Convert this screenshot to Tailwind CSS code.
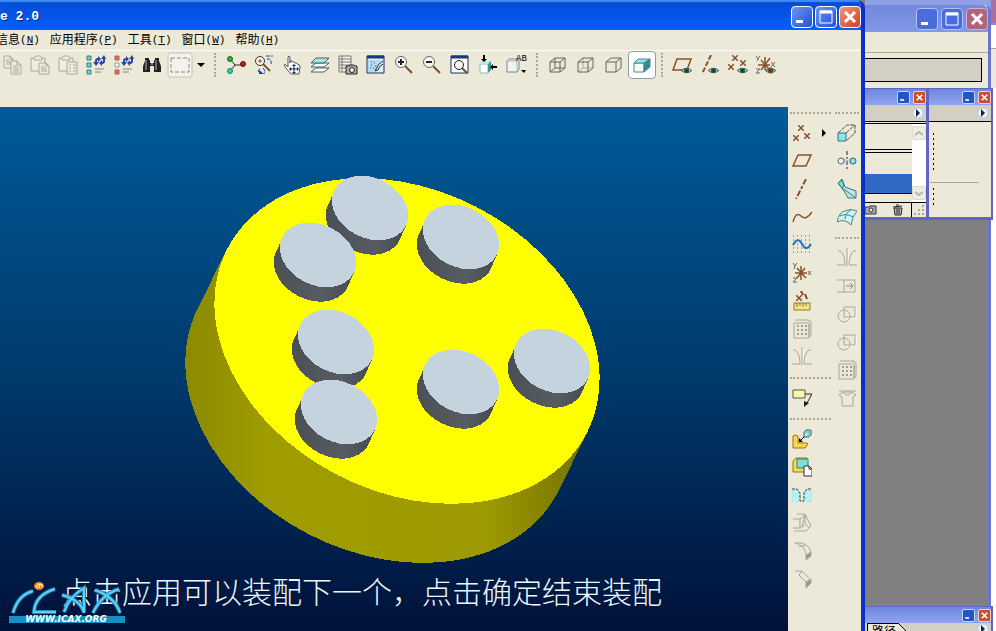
<!DOCTYPE html>
<html lang="zh-CN">
<head>
    <meta charset="UTF-8">
    <meta name="viewport" content="width=device-width, initial-scale=1.0">
    <title>2.0</title>
    <script src="https://cdn.jsdelivr.net/npm/@tailwindcss/browser@4"></script>
</head>
<body class="flex h-screen overflow-hidden bg-[#808080] font-['Liberation_Sans','Noto_Sans_CJK_SC',sans-serif] text-black">

<!-- shared symbols -->
<svg class="hidden">
    <symbol id="eye" viewBox="0 0 12 8"><path d="M0 4Q6-1 12 4Q6 9 0 4Z" fill="#dfe8e0" stroke="#1f3a34"/><circle cx="6" cy="4" r="3" fill="#1f6058"/><circle cx="6" cy="4" r="1" fill="#000"/></symbol>
    <symbol id="mirror" viewBox="0 0 20 20"><path d="M11 1v19" stroke="#fff"/><path d="M10 0v19M1 3h2q5 3 5 14M19 3h-2q-5 3-5 14M0 17h8M12 17h8" fill="none" stroke="#aaa798"/></symbol>
    <symbol id="grid" viewBox="0 0 20 20"><path d="M3 1h14l2 2v14h-2M17 5v14H2V4M2 4h13l2-2M17 4v14" fill="none" stroke="#aaa798"/><path d="M5 7h2M9 7h2M13 7h2M5 11h2M9 11h2M13 11h2M5 15h2M9 15h2M13 15h2" stroke="#a09d90" stroke-width="2"/></symbol>
    <symbol id="bool" viewBox="0 0 20 20"><path d="M9 14h10V4" fill="none" stroke="#fff"/><circle cx="7" cy="12" r="6" fill="none" stroke="#aaa798"/><path d="M7 3h11v10H7z" fill="none" stroke="#aaa798"/></symbol>
    <symbol id="arrow" viewBox="0 0 12 12"><circle cx="6" cy="6" r="5" fill="#eef4ff" stroke="#b8cdf2"/><path d="M4 2l4 4-4 4z" fill="#123"/></symbol>
    <symbol id="min" viewBox="0 0 20 20"><path d="M4 13h7v3H4z" fill="#fff"/></symbol>
    <symbol id="max" viewBox="0 0 20 20"><path d="M4 4h12v12H4z" fill="none" stroke="#fff"/><path d="M4 5h12" stroke="#fff" stroke-width="3"/></symbol>
    <symbol id="close" viewBox="0 0 20 20"><path d="M5 5l10 10M15 5L5 15" stroke="#fff" stroke-width="3"/></symbol>
    <symbol id="x" viewBox="0 0 6 6"><path d="M0 0l6 6M6 0L0 6" stroke="#8a5028" stroke-width="1.5"/></symbol>
</svg>

<!-- main window -->
<div class="flex min-w-0 flex-1 flex-col overflow-hidden rounded-tr-lg border-r-4 border-[#0a31c4] bg-[#ece9d8]">
    <header class="flex h-[30px] shrink-0 items-center justify-between bg-linear-to-b from-[#0a4bd0] via-[#0454e8] to-[#0361fb] shadow-[inset_0_2px_1px_#3f8df5]">
        <h1 class="pt-1 font-['Liberation_Mono',monospace] text-[13px] font-bold whitespace-pre text-white [text-shadow:1px_1px_#0a2a80]">e 2.0</h1>
        <div class="flex gap-0.5 pt-1">
            <button aria-label="最小化" class="size-[22px] rounded-sm border border-white bg-linear-to-br from-[#7094ee] to-[#1c50d8]"><svg class="size-full"><use href="#min"/></svg></button>
            <button aria-label="最大化" class="size-[22px] rounded-sm border border-white bg-linear-to-br from-[#7094ee] to-[#1c50d8]"><svg class="size-full"><use href="#max"/></svg></button>
            <button aria-label="关闭" class="size-[22px] rounded-sm border border-white bg-linear-to-br from-[#ee9478] to-[#cf4018]"><svg class="size-full"><use href="#close"/></svg></button>
        </div>
    </header>

    <nav class="-ml-1 flex h-[21px] shrink-0 items-center gap-2.5 border-b border-white text-xs whitespace-nowrap">
        <button class="flex items-center">信息<span class="font-['Liberation_Mono',monospace] text-[11px]">(<u>N</u>)</span></button>
        <button class="flex items-center">应用程序<span class="font-['Liberation_Mono',monospace] text-[11px]">(<u>P</u>)</span></button>
        <button class="flex items-center">工具<span class="font-['Liberation_Mono',monospace] text-[11px]">(<u>T</u>)</span></button>
        <button class="flex items-center">窗口<span class="font-['Liberation_Mono',monospace] text-[11px]">(<u>W</u>)</span></button>
        <button class="flex items-center">帮助<span class="font-['Liberation_Mono',monospace] text-[11px]">(<u>H</u>)</span></button>
    </nav>

    <!-- toolbar -->
    <div class="-ml-0.5 flex h-14 shrink-0 items-start">
        <button aria-label="复制" class="grid size-7 shrink-0 place-items-center"><svg viewBox="0 0 20 20" class="size-5" fill="#efede0" stroke="#aaa798"><path d="M2 1h6l3 3v9H2zM8 1v3h3M4 5h3M4 7h5M4 9h5"/><path d="M9 6h6l4 4v9H9zM15 6v4h4M11 11h4M11 13h6M11 15h6M11 17h6"/></svg></button>
        <button aria-label="粘贴" class="grid size-7 shrink-0 place-items-center"><svg viewBox="0 0 20 20" class="size-5" fill="#efede0" stroke="#aaa798"><path d="M1 3h14v13H1z"/><path d="M4 3l2-2h4l2 2v2H4z"/><path d="M9 8h7l3 3v8H9zM16 8v3h3M11 12h4M11 14h6M11 16h6"/></svg></button>
        <button aria-label="选择性粘贴" class="grid size-7 shrink-0 place-items-center"><svg viewBox="0 0 20 20" class="size-5" fill="#efede0" stroke="#aaa798"><path d="M1 3h14v13H1z"/><path d="M4 3l2-2h4l2 2v2H4z"/><path d="M9 7h10v12H9zM11 10h2M15 10h3M11 13h2M15 13h3M11 16h2M15 16h3"/></svg></button>
        <button aria-label="再生" class="grid size-7 shrink-0 place-items-center"><svg viewBox="0 0 20 20" class="size-5"><g fill="#6cd4d4" stroke="#3a7a7c"><path d="M1 1h4v4H1zM1 8h4v4H1zM1 15h4v4H1z"/></g><path d="M10 9V6q0-2 2-2M18 3v3q0 2-2 2" fill="none" stroke="#2446a4" stroke-width="2"/><path d="M7 7l3 4 3-4zM15 4l3-4 2 4zM12 1l3 3-3 3zM16 5l-3 3 3 3z" fill="#2446a4"/><path d="M9 14h9M9 17h6" stroke="#8a887c"/></svg></button>
        <button aria-label="再生管理器" class="grid size-7 shrink-0 place-items-center"><svg viewBox="0 0 20 20" class="size-5"><path d="M1 1h4v4H1zM1 15h4v4H1z" fill="#e86860" stroke="#b05c58"/><path d="M1 8h4v4H1z" fill="#f4f4f8" stroke="#999"/><path d="M10 9V6q0-2 2-2M18 3v3q0 2-2 2" fill="none" stroke="#2446a4" stroke-width="2"/><path d="M7 7l3 4 3-4zM15 4l3-4 2 4zM12 1l3 3-3 3zM16 5l-3 3 3 3z" fill="#2446a4"/><path d="M9 14h9M9 17h6" stroke="#8a887c"/></svg></button>
        <button aria-label="查找" class="grid size-7 shrink-0 place-items-center"><svg viewBox="0 0 20 20" class="size-5" fill="#222"><path d="M3 3h4v2h1v3h4V5h1V3h4v3l2 5v6h-7v-6H8v6H1v-6l2-5z"/><path d="M4 5v10M14 5v10" stroke="#bbb"/><path d="M9 9h2" stroke="#eee"/></svg></button>
        <button aria-label="选取" class="grid size-7 shrink-0 place-items-center"><svg viewBox="0 0 26 26" class="size-[26px]"><rect x="1" y="1" width="24" height="24" rx="2" fill="#f4f3ea" stroke="#c4c2b6"/><path d="M4 6h18v14H4z" fill="none" stroke="#888" stroke-dasharray="4 2"/></svg></button>
        <button aria-label="更多" class="grid h-7 w-3.5 shrink-0 place-items-center"><svg viewBox="0 0 8 4" class="h-1 w-2"><path d="M0 0h8L4 4z"/></svg></button>
        <span class="flex h-7 w-3.5 shrink-0 items-center justify-center"><i class="h-6 border-l-2 border-dotted border-[#aaa798]"></i></span>
        <button aria-label="旋转中心" class="grid size-7 shrink-0 place-items-center"><svg viewBox="0 0 20 20" class="size-5"><path d="M4 4l5 6h8M9 10l-5 6" fill="none" stroke="#222"/><circle cx="4" cy="4" r="2.500" fill="#2cb432" stroke="#176a1c"/><circle cx="17" cy="9" r="2.500" fill="#c01c1c" stroke="#701010"/><circle cx="4" cy="16" r="2.500" fill="#2cd0b0" stroke="#16806c"/></svg></button>
        <button aria-label="定向模式" class="grid size-7 shrink-0 place-items-center"><svg viewBox="0 0 20 20" class="size-5"><path d="M9 9l7 7" stroke="#845030" stroke-width="2"/><circle cx="6" cy="6" r="4.500" fill="#f8f4e8" stroke="#333"/><path d="M6 4v4M4 6h4" stroke="#a04830"/><path d="M12 1h7M13 4q5-1 4 5M6 14q-3 1-1 4M9 13q3 3 1 6" fill="none" stroke="#2444a8" stroke-dasharray="4 1"/><path d="M5 19l5 0-5-4z" fill="#1c3c9c"/></svg></button>
        <button aria-label="平移" class="grid size-7 shrink-0 place-items-center"><svg viewBox="0 0 20 20" class="size-5"><path d="M6 12V2q1-2 2 0v6-2q2-1 2 1 2-1 3 1 2 0 2 1 3 0 3 3l-1 7H9L3 12q-2-4 1-2z" fill="#fff" stroke="#555"/><path d="M12 10v8M8 14h8" stroke="#10205c"/><path d="M12 9l-2 2h4zM12 19l-2-2h4zM7 14l2-2v4zM17 14l-2-2v4z" fill="#10205c"/></svg></button>
        <button aria-label="图层" class="grid size-7 shrink-0 place-items-center"><svg viewBox="0 0 20 20" class="size-5" fill="#fff" stroke="#44605e"><path d="M1 17l5-4h13l-5 4z"/><path d="M1 12l5-4h13l-5 4z"/><path d="M1 8l5-5h13l-5 5z" fill="#a4e8ec"/></svg></button>
        <button aria-label="视图管理器" class="grid size-7 shrink-0 place-items-center"><svg viewBox="0 0 20 20" class="size-5"><path d="M1 1h12v16H1zM1 4h12M1 7h12M1 10h12M1 13h12M4 1v16" fill="#f4f4ee" stroke="#777"/><path d="M8 11h3l1-1h4l1 1h2v8H8z" fill="#b0b0a4" stroke="#222"/><circle cx="14" cy="15" r="2.500" fill="#eee" stroke="#222"/></svg></button>
        <button aria-label="重画" class="grid size-7 shrink-0 place-items-center"><svg viewBox="0 0 20 20" class="size-5"><path d="M1 1h17v17H1z" fill="#dcf0fa" stroke="#163060"/><path d="M1 2h17" stroke="#163878" stroke-width="3"/><path d="M2 5h13l-7 12H2z" fill="#b4dcf0"/><path d="M5 7h1M8 8h1M5 10h1M9 11h1M4 13h1M7 13h1" stroke="#345c90"/><path d="M17 6q-5 2-8 10M17 9q-4 2-5 6l-3 1" fill="none" stroke="#223"/></svg></button>
        <button aria-label="放大" class="grid size-7 shrink-0 place-items-center"><svg viewBox="0 0 20 20" class="size-5"><path d="M11 11l7 7" stroke="#7c4c2c" stroke-width="2"/><circle cx="7" cy="7" r="5.500" fill="#f8f8f4" stroke="#666"/><path d="M4 7h6M7 4v6" stroke="#222" stroke-width="2"/></svg></button>
        <button aria-label="缩小" class="grid size-7 shrink-0 place-items-center"><svg viewBox="0 0 20 20" class="size-5"><path d="M11 11l7 7" stroke="#7c4c2c" stroke-width="2"/><circle cx="7" cy="7" r="5.500" fill="#f8f8f4" stroke="#666"/><path d="M4 7h6" stroke="#222" stroke-width="2"/></svg></button>
        <button aria-label="重新调整" class="grid size-7 shrink-0 place-items-center"><svg viewBox="0 0 20 20" class="size-5"><path d="M1 1h17v17H1z" fill="#fff" stroke="#163060"/><path d="M1 2h17" stroke="#163878" stroke-width="3"/><path d="M12 13l5 5" stroke="#7c4c2c" stroke-width="2"/><circle cx="9" cy="10" r="4.500" fill="#f4f4f4" stroke="#222"/></svg></button>
        <button aria-label="重定向" class="grid size-7 shrink-0 place-items-center"><svg viewBox="0 0 20 20" class="size-5"><path d="M2 9h8v9H2z" fill="#fff" stroke="#8cb8b8"/><path d="M2 9l3-3h8l-3 3z" fill="#a8f0f0"/><path d="M10 9l3-3v9l-3 3z" fill="#3c9898"/><path d="M6 0v4M15 12h4" stroke="#000" stroke-width="2"/><path d="M3 4h6l-3 3zM15 9v6l-3-3z"/></svg></button>
        <button aria-label="已保存的视图" class="grid size-7 shrink-0 place-items-center"><svg viewBox="0 0 20 20" class="size-5 overflow-visible"><path d="M1 6l2-2h10v10l-2 3H1z" fill="#f0f4ec" stroke="#789"/><path d="M1 6h10v10M11 6l2-2" fill="none" stroke="#9bb"/><text x="10" y="6" font-family="Liberation Mono, monospace" font-size="9">AB</text><path d="M15 15h5l-2 3z"/></svg></button>
        <span class="flex h-7 w-3.5 shrink-0 items-center justify-center"><i class="h-6 border-l-2 border-dotted border-[#aaa798]"></i></span>
        <button aria-label="线框" class="grid size-7 shrink-0 place-items-center"><svg viewBox="0 0 20 20" class="size-5" fill="none" stroke="#68655a"><path d="M2 7h10v10H2zM7 3h10v10H7zM2 7l5-4M12 7l5-4M12 17l5-4M2 17l5-4"/></svg></button>
        <button aria-label="隐藏线" class="grid size-7 shrink-0 place-items-center"><svg viewBox="0 0 20 20" class="size-5" fill="none" stroke="#68655a"><path d="M7 3v10h10M2 17l5-4" stroke="#b0ada0"/><path d="M2 7h10v10H2zM7 3h10v10M2 7l5-4M12 7l5-4M12 17l5-4"/></svg></button>
        <button aria-label="无隐藏线" class="grid size-7 shrink-0 place-items-center"><svg viewBox="0 0 20 20" class="size-5" fill="none" stroke="#68655a"><path d="M2 7h10v10H2zM7 3h10v10M2 7l5-4M12 7l5-4M12 17l5-4"/></svg></button>
        <button aria-label="着色" class="grid size-7 shrink-0 place-items-center rounded-sm border border-[#8a9eae] bg-white"><svg viewBox="0 0 20 20" class="size-5" stroke="#5a8488"><path d="M2 8h10v9H2z" fill="#f4fcfc"/><path d="M2 8l4-4h12l-6 4z" fill="#8ce8ec"/><path d="M12 8l6-4v8l-6 5z" fill="#2e8c94"/></svg></button>
        <span class="flex h-7 w-3 shrink-0 items-center justify-center"><i class="h-6 border-l-2 border-dotted border-[#aaa798]"></i></span>
        <button aria-label="基准平面显示" class="grid size-7 shrink-0 place-items-center"><svg viewBox="0 0 20 20" class="size-5"><path d="M5 4h14l-4 11H1z" fill="none" stroke="#8a5028" stroke-width="1.500"/><use href="#eye" x="9" y="12" width="11" height="7"/></svg></button>
        <button aria-label="基准轴显示" class="grid size-7 shrink-0 place-items-center"><svg viewBox="0 0 20 20" class="size-5"><path d="M11 0L2 19" stroke="#8a5028" stroke-width="2" stroke-dasharray="5 2"/><use href="#eye" x="8" y="12" width="11" height="7"/></svg></button>
        <button aria-label="基准点显示" class="grid size-7 shrink-0 place-items-center"><svg viewBox="0 0 20 20" class="size-5"><use href="#x" x="4" y="0" width="6" height="6"/><use href="#x" x="12" y="5" width="6" height="6"/><use href="#x" x="0" y="9" width="6" height="6"/><use href="#eye" x="9" y="12" width="11" height="7"/></svg></button>
        <button aria-label="坐标系显示" class="grid size-7 shrink-0 place-items-center"><svg viewBox="0 0 20 20" class="size-5" fill="none" stroke="#8a5028"><path d="M9 2v13M2 10h12M5 5l8 9M14 3L5 15" stroke-width="1.500"/><path d="M0 1l2 3 2-3M2 4l-1 2M15 7l4 5M19 7l-4 5M0 14h4l-4 4h4" stroke="#666"/><use href="#eye" x="9" y="12" width="11" height="7"/></svg></button>
    </div>

    <div class="flex min-h-0 flex-1">
        <!-- model view -->
        <main class="relative min-w-0 flex-1 bg-linear-to-b from-[#005b98] via-[#003b6e] to-[#00123a]">
            <svg viewBox="0 107 788 524" preserveAspectRatio="xMidYMid slice" class="absolute inset-0 size-full" shape-rendering="crispEdges">
                <defs>
                    <linearGradient id="rim" x1="0" x2="1"><stop offset="0" stop-color="#8c8a00"/><stop offset=".2" stop-color="#9e9c00"/><stop offset=".75" stop-color="#9c9a00"/><stop offset="1" stop-color="#747200"/></linearGradient>
                    <linearGradient id="steel" x1="0" x2="1"><stop offset="0" stop-color="#4a5056"/><stop offset=".6" stop-color="#565c62"/><stop offset="1" stop-color="#454b51"/></linearGradient>
                    <g id="peg">
                        <path d="M-35-18L-43-1A40 30 27 0 0 28 35L36 18z" fill="url(#steel)"/>
                        <ellipse rx="40" ry="30" transform="rotate(27)" fill="#c5d3df"/>
                    </g>
                </defs>
                <path d="M227 249L198 308A202 151 27 0 0 558 492L587 433z" fill="url(#rim)"/>
                <ellipse cx="407" cy="341" rx="202" ry="151" transform="rotate(27 407 341)" fill="#ffff00"/>
                <use href="#peg" x="370" y="208"/>
                <use href="#peg" x="318" y="255"/>
                <use href="#peg" x="461" y="237"/>
                <use href="#peg" x="336" y="342"/>
                <use href="#peg" x="339" y="412"/>
                <use href="#peg" x="461" y="382"/>
                <use href="#peg" x="552" y="361"/>
            </svg>
            <p class="absolute bottom-[18px] left-[62px] font-['Noto_Sans_CJK_SC',sans-serif] text-[30px] leading-[46px] font-light whitespace-nowrap text-[#eef6fc]">点击应用可以装配下一个，点击确定结束装配</p>
            <svg viewBox="0 0 120 44" class="absolute bottom-[6px] left-[7px] h-11 w-[120px]">
                <g fill="none" stroke="#1c88b8" stroke-width="4"><path d="M6 32Q11 14 26 10M48 8Q28 14 27 31H49M55 14Q74 19 77 32M57 31Q62 16 77 7V31M88 9Q108 16 113 32M86 32Q94 14 112 8"/></g>
                <g fill="none" stroke="#62d0f4" stroke-width="2"><path d="M6 32Q11 14 26 10M48 8Q28 14 27 31H49M55 14Q74 19 77 32M57 31Q62 16 77 7V31M88 9Q108 16 113 32M86 32Q94 14 112 8"/></g>
                <ellipse cx="32" cy="5" rx="5" ry="4" fill="#f08a18"/><path d="M30 7q-1-4 3-4l-1 4M33 3q3 0 2 3" fill="none" stroke="#fff"/>
                <path d="M2 35h116v7H2z" fill="#1490c4"/>
                <text x="59" y="41" text-anchor="middle" font-family="DejaVu Sans, sans-serif" font-size="9" font-weight="bold" font-style="italic" fill="#fff">WWW.ICAX.ORG</text>
            </svg>
        </main>

        <!-- feature palette -->
        <aside class="flex shrink-0">
            <div class="flex w-[45px] flex-col items-start">
                <span class="flex h-3 w-full shrink-0 items-center px-0.5"><i class="w-full border-t-2 border-dotted border-[#aaa798]"></i></span>
                <div class="flex items-center">
                    <button aria-label="基准点" class="grid size-7 shrink-0 place-items-center"><svg viewBox="0 0 20 20" class="size-5"><use href="#x" x="6" y="2" width="6" height="6"/><use href="#x" x="1" y="12" width="6" height="6"/><use href="#x" x="12" y="10" width="6" height="6"/></svg></button>
                    <button aria-label="更多基准点" class="grid h-7 w-4 shrink-0 place-items-center"><svg viewBox="0 0 4 8" class="h-2 w-1"><path d="M0 0l4 4-4 4z"/></svg></button>
                </div>
                <button aria-label="基准平面" class="grid size-7 shrink-0 place-items-center"><svg viewBox="0 0 20 20" class="size-5"><path d="M6 4h13l-5 11H1z" fill="none" stroke="#8a5028" stroke-width="1.500"/></svg></button>
                <button aria-label="基准轴" class="grid size-7 shrink-0 place-items-center"><svg viewBox="0 0 20 20" class="size-5"><path d="M14 0L4 20" stroke="#8a5028" stroke-width="2" stroke-dasharray="6 2 3 2"/></svg></button>
                <button aria-label="草绘曲线" class="grid size-7 shrink-0 place-items-center"><svg viewBox="0 0 20 20" class="size-5"><path d="M1 15Q4 4 9 9T20 5" fill="none" stroke="#8a5028" stroke-width="1.500"/></svg></button>
                <button aria-label="草绘" class="grid size-7 shrink-0 place-items-center"><svg viewBox="0 0 20 20" class="size-5" fill="none"><path d="M1 1h18M1 5h18M1 9h18M1 13h18M1 17h18" stroke="#555" stroke-dasharray="1 3"/><path d="M1 10Q6 1 10 9T19 9" stroke="#2470c8" stroke-width="2"/></svg></button>
                <button aria-label="坐标系" class="grid size-7 shrink-0 place-items-center"><svg viewBox="0 0 20 20" class="size-5" fill="none"><path d="M9 3v14M3 10h12M5 5l9 10M13 5L5 15" stroke="#8a5028" stroke-width="1.500"/><path d="M1 0l2 3 2-3M3 3L2 6M16 8l3 4M19 8l-3 4M1 15h4l-4 4h4" stroke="#666"/></svg></button>
                <button aria-label="分析" class="grid size-7 shrink-0 place-items-center"><svg viewBox="0 0 20 20" class="size-5"><use href="#x" x="4" y="4" width="6" height="6"/><path d="M9 0l2 4M13 3l2 5" stroke="#8a4020" stroke-width="2"/><path d="M2 12h16v7H2z" fill="#f4e484" stroke="#8c7830"/><path d="M5 12v4M8 12v3M11 12v4M14 12v3" stroke="#8c7830"/></svg></button>
                <button aria-label="阵列" class="grid size-7 shrink-0 place-items-center"><svg class="size-5"><use href="#grid"/></svg></button>
                <button aria-label="镜像" class="grid size-7 shrink-0 place-items-center"><svg class="size-5"><use href="#mirror"/></svg></button>
                <span class="flex h-[13px] w-full shrink-0 items-center px-0.5"><i class="w-full border-t-2 border-dotted border-[#aaa798]"></i></span>
                <button aria-label="注释" class="grid size-7 shrink-0 place-items-center"><svg viewBox="0 0 20 20" class="size-5"><path d="M1 2h12v8H1z" fill="#fcf8a8" stroke="#555"/><path d="M13 6h7l-5 9" fill="none" stroke="#222"/><path d="M12 13v6l5-4z" fill="#222"/></svg></button>
                <span class="flex h-[13px] w-full shrink-0 items-center px-0.5"><i class="w-full border-t-2 border-dotted border-[#aaa798]"></i></span>
                <button aria-label="装配" class="grid size-7 shrink-0 place-items-center"><svg viewBox="0 0 20 20" class="size-5"><path d="M1 7l2-1 3 1v7h9l1 1-3 4H1z" fill="#f8d850" stroke="#98700c"/><path d="M12 3l2-2h5v5l-2 2h-5z" fill="#a0e8ec" stroke="#456"/><path d="M12 3h5v5M17 3l2-2" fill="none" stroke="#7ab"/><path d="M12 8l-3 3" stroke="#000"/><path d="M7 9v4h4z"/></svg></button>
                <button aria-label="创建元件" class="grid size-7 shrink-0 place-items-center"><svg viewBox="0 0 20 20" class="size-5"><path d="M1 4l3-3h11v12l-3 2H1z" fill="#f8dc50" stroke="#98700c"/><path d="M5 2h11v9H5z" fill="#7ce0dc" stroke="#2e8080"/><path d="M12 9h5l3 3v7h-8z" fill="#fff" stroke="#333"/><path d="M17 9v3h3" fill="none" stroke="#333"/></svg></button>
                <button aria-label="孔" class="grid size-7 shrink-0 place-items-center"><svg viewBox="0 0 20 20" class="size-5"><path d="M0 5h5l3 4v8H0zM20 5h-5l-3 4v8h8z" fill="#a8f0f0"/><path d="M1 9l5-3M1 14l7-5M1 17l7-4M12 13l7-6M12 17l7-5" stroke="#dcfcfc"/><path d="M0 4h5l3 4v8h4V8l3-4h5" fill="none" stroke="#345" stroke-dasharray="3 1"/></svg></button>
                <button aria-label="拔模" class="grid size-7 shrink-0 place-items-center"><svg viewBox="0 0 20 20" class="size-5" fill="none" stroke="#aaa798"><path d="M1 6h7v9H1M8 6l5-4-3 12M5 1h8l6 12-5 5H2M8 15l5-3M13 2v8l4 5"/></svg></button>
                <button aria-label="倒圆角" class="grid size-7 shrink-0 place-items-center"><svg viewBox="0 0 20 20" class="size-5" fill="none" stroke="#aaa798"><path d="M3 2h6q9 2 10 10M3 2q10 2 11 12M7 6q2-2 6-1"/><path d="M14 14l5-3v4l-5 4z" fill="#9c998c"/></svg></button>
                <button aria-label="倒角" class="grid size-7 shrink-0 place-items-center"><svg viewBox="0 0 20 20" class="size-5" fill="none" stroke="#aaa798"><path d="M3 2h7l9 9M7 6l7 7M7 6l3-4"/><path d="M14 13l5-3v4l-5 5z" fill="#9c998c"/></svg></button>
            </div>
            <div class="flex w-7 flex-col">
                <span class="flex h-3 w-full shrink-0 items-center px-0.5"><i class="w-full border-t-2 border-dotted border-[#aaa798]"></i></span>
                <button aria-label="拉伸" class="grid size-7 shrink-0 place-items-center"><svg viewBox="0 0 20 20" class="size-5"><path d="M1 10l9-8h8v8l-9 8M9 10l9-8" fill="none" stroke="#555" stroke-dasharray="4 1"/><path d="M1 10h8v8H1z" fill="#8ce4e8" stroke="#30787c"/></svg></button>
                <button aria-label="旋转" class="grid size-7 shrink-0 place-items-center"><svg viewBox="0 0 20 20" class="size-5" fill="none"><path d="M10 0v20" stroke="#222" stroke-dasharray="4 2 2 2"/><path d="M4 7l12 6M4 13l12-6" stroke="#90a8a8" stroke-dasharray="2 1"/><circle cx="4" cy="10" r="3" fill="#e8f4f0" stroke="#567"/><circle cx="16" cy="10" r="3" fill="#88e0e0" stroke="#287074"/></svg></button>
                <button aria-label="扫描混合" class="grid size-7 shrink-0 place-items-center"><svg viewBox="0 0 20 20" class="size-5" stroke="#41767a"><path d="M1 4l4-4 3 8 11 4v7h-8l-4-7z" fill="#c0e4e6"/><path d="M1 4l4-3 2 6-2 2z" fill="#70e0e8"/><path d="M5 9l14 10" fill="none"/></svg></button>
                <button aria-label="边界混合" class="grid size-7 shrink-0 place-items-center"><svg viewBox="0 0 20 20" class="size-5" stroke="#557f82"><path d="M0 15Q2 5 8 4Q14 1 20 4Q15 9 14 18Q8 11 0 15z" fill="#c8f8f8"/><path d="M8 12Q9 5 14 3M3 9q6-3 13 1" fill="none"/></svg></button>
                <span class="flex h-[13px] w-full shrink-0 items-center px-0.5"><i class="w-full border-t-2 border-dotted border-[#aaa798]"></i></span>
                <button aria-label="镜像几何" class="grid size-7 shrink-0 place-items-center"><svg class="size-5"><use href="#mirror"/></svg></button>
                <button aria-label="延伸" class="grid size-7 shrink-0 place-items-center"><svg viewBox="0 0 20 20" class="size-5" fill="none" stroke="#aaa798"><path d="M0 4h18v12H0M7 4v12"/><path d="M9 10h7M13 7l3 3-3 3" stroke="#8c897c"/></svg></button>
                <button aria-label="合并" class="grid size-7 shrink-0 place-items-center"><svg class="size-5"><use href="#bool"/></svg></button>
                <button aria-label="修剪" class="grid size-7 shrink-0 place-items-center"><svg class="size-5"><use href="#bool"/></svg></button>
                <button aria-label="阵列特征" class="grid size-7 shrink-0 place-items-center"><svg class="size-5"><use href="#grid"/></svg></button>
                <button aria-label="收缩包络" class="grid size-7 shrink-0 place-items-center"><svg viewBox="0 0 20 20" class="size-5" fill="none" stroke="#aaa798"><path d="M2 7l4-3h9l4 3-3 2v9H5V9zM6 4q4 6 9 0M2 3h17"/></svg></button>
            </div>
        </aside>
    </div>
</div>

<!-- windows behind -->
<div class="flex w-[131px] shrink-0 flex-col bg-[#8c9ae0]">
    <div class="flex h-[88px] shrink-0 bg-linear-to-b from-[#8fa0e4] from-25% to-[#ece9d8] to-30%">
        <section class="mt-[5px] flex flex-1 flex-col rounded-tr-md border-r-[3px] border-[#6c74cc] bg-[#ece9d8]">
            <div class="flex h-[27px] items-center justify-end gap-[3px] rounded-tr-md bg-linear-to-b from-[#7288dc] to-[#8098e6]">
                <button aria-label="最小化" class="size-[22px] rounded-sm border border-[#b4c2f2] bg-[#4a6cdc]"><svg class="size-full"><use href="#min"/></svg></button>
                <button aria-label="最大化" class="size-[22px] rounded-sm border border-[#b4c2f2] bg-[#4a6cdc]"><svg class="size-full"><use href="#max"/></svg></button>
                <button aria-label="关闭" class="size-[22px] rounded-sm border border-[#c8b0d8] bg-[#b46478]"><svg class="size-full"><use href="#close"/></svg></button>
            </div>
            <div class="h-[21px] border-b border-[#aca899]"></div>
            <div class="mt-[5px] mr-[6px] h-6 border border-l-0 border-black bg-[#d3cfc4]"></div>
        </section>
        <div class="flex w-[5px] flex-col bg-[#ece9d8]">
            <i class="h-[25px] border-b-2 border-[#8090dc] bg-[#a870a0]"></i>
            <i class="h-6 border-b border-[#aca899] bg-white"></i>
        </div>
    </div>

    <div class="flex min-h-0 flex-1 bg-white">
        <div class="flex flex-1 flex-col border-r-[3px] border-[#6c74cc] bg-[#808080]">
            <div class="-mr-[5px] flex h-[132px] shrink-0 border-b-[3px] border-[#6064c4] bg-[#ece9d8]">
                <section class="flex w-16 flex-col border-r-[3px] border-[#6064c4]">
                    <div class="flex h-[17px] shrink-0 items-center justify-end gap-[3px] border-t border-[#5868c4] bg-linear-to-b from-[#6f86e0] to-[#8ea6ee]">
                        <button aria-label="最小化" class="size-[13px] rounded-xs border border-[#c4d4fa] bg-[#1f56c8]"><svg class="size-full"><use href="#min"/></svg></button>
                        <button aria-label="关闭" class="size-[13px] rounded-xs border border-[#f4d0c8] bg-[#cc4c34]"><svg class="size-full"><use href="#close"/></svg></button>
                    </div>
                    <div class="flex h-[17px] shrink-0 items-center justify-end border-b border-black bg-[#d3cfc4] pr-0.5"><svg class="size-3"><use href="#arrow"/></svg></div>
                    <div class="mt-px flex flex-1 border-y border-black">
                        <div class="flex flex-1 flex-col">
                            <div class="h-[29px] border-b-4 border-double border-black"></div>
                            <div class="h-[21px]"></div>
                            <div class="h-5 border-b border-black bg-[#316ac5]"></div>
                        </div>
                        <div class="flex w-3.5 flex-col justify-between bg-white py-0.5">
                            <button aria-label="向上" class="grid h-3.5 place-items-center rounded-xs border border-[#dddacb] bg-[#efede2]"><svg viewBox="0 0 8 5" class="h-[5px] w-2"><path d="M0 4l4-3 4 3" fill="none" stroke="#b8b5a6" stroke-width="2"/></svg></button>
                            <button aria-label="向下" class="grid h-3.5 place-items-center rounded-xs border border-[#dddacb] bg-[#efede2]"><svg viewBox="0 0 8 5" class="h-[5px] w-2"><path d="M0 1l4 3 4-3" fill="none" stroke="#b8b5a6" stroke-width="2"/></svg></button>
                        </div>
                    </div>
                    <div class="flex h-3.5 shrink-0 items-center">
                        <button aria-label="快照" class="h-3 w-[13px]"><svg viewBox="0 0 12 12" class="size-3"><path d="M0 3h4l1-1h6v8H0z" fill="#aaa" stroke="#333"/><circle cx="6" cy="6" r="2" fill="#eee" stroke="#333"/></svg></button>
                        <button aria-label="删除" class="ml-3.5 size-3"><svg viewBox="0 0 12 12" class="size-3"><path d="M2 4h8l-1 7H3z" fill="#bbb" stroke="#222"/><path d="M1 3l9-1M4 1h3M5 5v5M7 5v5" stroke="#222"/></svg></button>
                        <i class="ml-[7px] grid h-full flex-1 place-items-center border-l border-black"><svg viewBox="0 0 12 12" class="size-3" fill="#aaa798"><path d="M9 1h2v2H9zM5 5h2v2H5zM9 5h2v2H9zM1 9h2v2H1zM5 9h2v2H5zM9 9h2v2H9z"/></svg></i>
                    </div>
                </section>
                <section class="flex flex-1 flex-col border-r-2 border-[#6064c4]">
                    <div class="flex h-[17px] shrink-0 items-center justify-end gap-[3px] border-t border-[#5868c4] bg-linear-to-b from-[#6f86e0] to-[#8ea6ee]">
                        <button aria-label="最小化" class="size-[13px] rounded-xs border border-[#c4d4fa] bg-[#1f56c8]"><svg class="size-full"><use href="#min"/></svg></button>
                        <button aria-label="关闭" class="size-[13px] rounded-xs border border-[#f4d0c8] bg-[#cc4c34]"><svg class="size-full"><use href="#close"/></svg></button>
                    </div>
                    <div class="flex h-[17px] shrink-0 items-center justify-end border-b border-black bg-[#d3cfc4] pr-0.5"><svg class="size-3"><use href="#arrow"/></svg></div>
                    <svg viewBox="0 0 60 95" class="h-[95px] w-[60px]" shape-rendering="crispEdges"><path d="M4 11v40M4 66v20" stroke="#000" stroke-dasharray="2 3"/><path d="M1 60h49" stroke="#aca899"/></svg>
                </section>
            </div>
            <div class="flex-1"></div>
            <section class="-mr-[5px] flex h-[25px] shrink-0 flex-col border-t border-r-2 border-[#6064c4]">
                <div class="flex h-4 shrink-0 items-center justify-end gap-[3px] bg-linear-to-b from-[#6f86e0] to-[#8ea6ee]">
                    <button aria-label="最小化" class="size-[13px] rounded-xs border border-[#c4d4fa] bg-[#1f56c8]"><svg class="size-full"><use href="#min"/></svg></button>
                    <button aria-label="关闭" class="size-[13px] rounded-xs border border-[#f4d0c8] bg-[#cc4c34]"><svg class="size-full"><use href="#close"/></svg></button>
                </div>
                <div class="flex flex-1 items-start justify-between overflow-hidden bg-[#d3cfc4] pr-0.5">
                    <button class="relative ml-0.5 h-4 border-t border-l border-black bg-[#ece9d8] pt-px pr-3 pl-1 text-xs leading-3"><svg viewBox="0 0 10 10" class="absolute top-[-1px] right-0 size-2.5"><path d="M0 0h10v10z" fill="#d3cfc4"/><path d="M0 0l10 10" stroke="#000"/></svg>路径</button>
                    <svg class="size-3 shrink-0"><use href="#arrow"/></svg>
                </div>
            </section>
        </div>
        <i class="w-[5px] shrink-0"></i>
    </div>
</div>
</body>
</html>
